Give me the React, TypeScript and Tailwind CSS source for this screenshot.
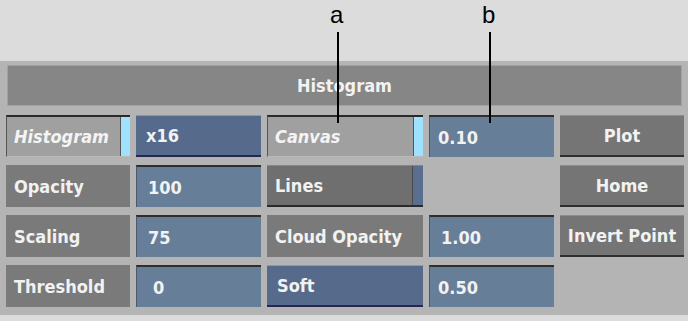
import React from 'react';

const font = { fontFamily: '"DejaVu Sans Condensed", "DejaVu Sans", sans-serif' };

function Label({ text }: { text: string }) {
  return (
    <div className="flex items-center bg-[#7a7a7a] pl-[8px] text-[#f2f2f2]">{text}</div>
  );
}

function Value({ text, pad = 'pl-[11px]' }: { text: string; pad?: string }) {
  return (
    <div className={`flex items-center bg-[#677e98] border-t-2 border-t-[#2e2e2e] border-l border-l-[#4d5868] text-[#f2f2f2] ${pad}`}>
      {text}
    </div>
  );
}

function BlueButton({ text }: { text: string }) {
  return (
    <div className="flex items-center bg-[#566b8b] border-t border-t-[#8798b4] border-b-2 border-b-[#262650] pl-[10px] text-[#f2f2f2]">
      {text}
    </div>
  );
}

function GrayButton({ text }: { text: string }) {
  return (
    <div className="flex items-center justify-center bg-[#757575] border-t border-t-[#8c8c8c] border-b-2 border-b-[#2f2f2f] text-[#f2f2f2]">
      {text}
    </div>
  );
}

function Toggle({ text }: { text: string }) {
  return (
    <div className="flex bg-[#a0a0a0] border-t-2 border-t-[#2a2a2a] border-l border-l-[#555] border-b border-b-[#b9b9b9]">
      <div className="flex-1 flex items-center pl-[7px] italic text-[#f4f4f4]">{text}</div>
      <div className="w-[10px] bg-[#9fe2ff] border-l border-l-[#555]" />
    </div>
  );
}

export default function App() {
  return (
    <div className="relative w-[688px] h-[321px] bg-[#dcdcdc] overflow-hidden" style={font}>
      <div className="h-[61px]" />
      <div className="h-[254px] bg-[#b4b4b4] px-[6px] pt-[4px] text-[18px] font-bold">
        <div className="h-[41px] ml-[1px] bg-[#868686] border border-[#a2a2a2] flex items-center justify-center text-[#f2f2f2]">
          Histogram
        </div>
        <div className="mt-[9px] grid grid-cols-[124px_125px_156px_125px_124px] grid-rows-[42px_42px_42px_42px] gap-x-[6px] gap-y-[8px]">
          <Toggle text="Histogram" />
          <BlueButton text="x16" />
          <Toggle text="Canvas" />
          <Value text="0.10" pad="pl-[8px]" />
          <GrayButton text="Plot" />

          <Label text="Opacity" />
          <Value text="100" />
          <div className="flex bg-[#6f6f6f] border-t border-t-[#858585] border-b-2 border-b-[#2a2a2a]">
            <div className="flex-1 flex items-center pl-[8px] text-[#f2f2f2]">Lines</div>
            <div className="w-[11px] bg-[#5a6e90] border-l border-l-[#4a4a4a]" />
          </div>
          <div />
          <GrayButton text="Home" />

          <Label text="Scaling" />
          <Value text="75" />
          <Label text="Cloud Opacity" />
          <Value text="1.00" />
          <GrayButton text="Invert Point" />

          <Label text="Threshold" />
          <Value text="0" pad="pl-[16px]" />
          <BlueButton text="Soft" />
          <Value text="0.50" pad="pl-[8px]" />
          <div />
        </div>
      </div>

      <div className="absolute left-[330px] top-[3px] text-[24px] leading-none text-black" style={{ fontFamily: '"Liberation Sans", Arial, sans-serif' }}>a</div>
      <div className="absolute left-[337px] top-[32px] w-[2px] h-[91px] bg-black" />
      <div className="absolute left-[482px] top-[3px] text-[24px] leading-none text-black" style={{ fontFamily: '"Liberation Sans", Arial, sans-serif' }}>b</div>
      <div className="absolute left-[489px] top-[32px] w-[2px] h-[91px] bg-black" />
    </div>
  );
}
